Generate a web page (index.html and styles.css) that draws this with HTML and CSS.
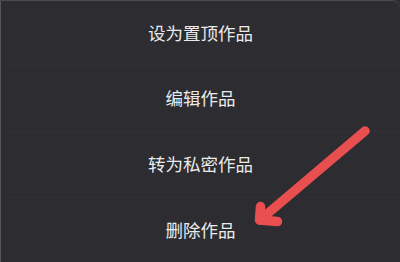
FILE: index.html
```html
<!DOCTYPE html>
<html lang="zh-CN">
<head>
<meta charset="utf-8">
<link rel="stylesheet" href="styles.css">
</head>
<body>
<div class="sheet">
  <ul class="menu">
    <li class="item">设为置顶作品</li>
    <li class="item">编辑作品</li>
    <li class="item">转为私密作品</li>
    <li class="item">删除作品</li>
  </ul>
  <svg class="arrow" width="400" height="262" viewBox="0 0 400 262">
    <g fill="none" stroke="#e94f4f" stroke-width="9.5" stroke-linecap="round" stroke-linejoin="round">
      <path d="M365 131 L260 220"/>
      <path d="M260.5 206.5 L259.5 220 L277.5 221.5"/>
    </g>
  </svg>
</div>
</body>
</html>
```
FILE: styles.css
```css
html, body {
  margin: 0;
  padding: 0;
  background: #2c2c31;
}
.sheet {
  position: relative;
  width: 400px;
  height: 262px;
  overflow: hidden;
  background: #2c2c31;
  border-top: 1px solid #4a4a50;
  border-left: 1px solid #55555b;
  box-sizing: border-box;
  border-top-right-radius: 8px;
}
.menu {
  list-style: none;
  margin: 0;
  padding: 0;
  display: flex;
  flex-direction: column;
}
.item {
  height: 66px;
  display: flex;
  align-items: center;
  justify-content: center;
  border-bottom: 1px solid #303035;
  font-family: "Noto Sans CJK SC", "Noto Sans", sans-serif;
  font-size: 17.5px;
  color: #ebebeb;
  padding-bottom: 2px;
  box-sizing: border-box;
}
.item:first-child {
  height: 65px;
}
.arrow {
  position: absolute;
  left: -1px;
  top: -1px;
}
```
